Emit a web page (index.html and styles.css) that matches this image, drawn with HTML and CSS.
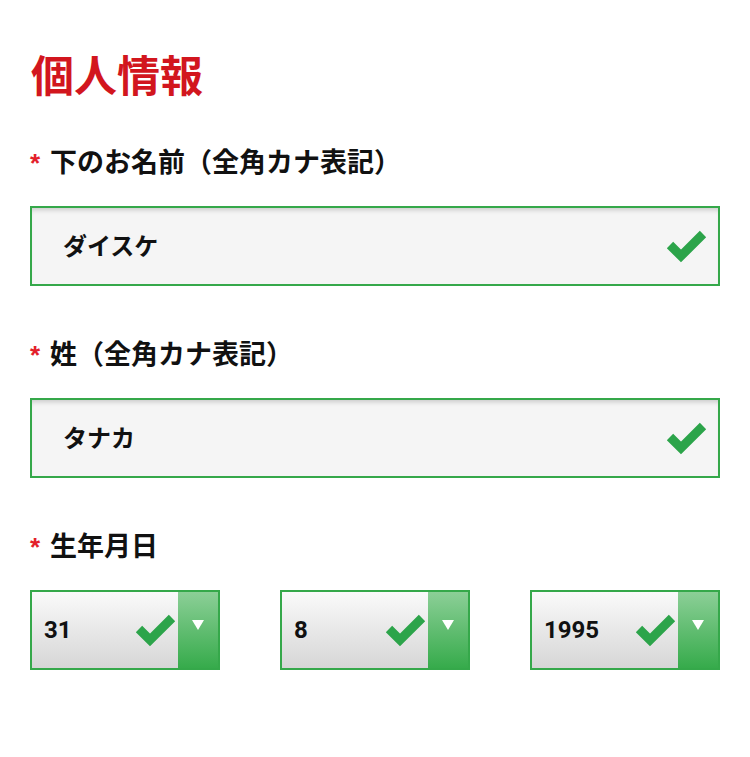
FILE: index.html
```html
<!DOCTYPE html>
<html lang="ja">
<head>
<meta charset="utf-8">
<link rel="stylesheet" href="styles.css">
</head>
<body>
<div class="page">
  <h1 class="title">個人情報</h1>

  <div class="field">
    <div class="label"><span class="req">*</span>下のお名前（全角カナ表記）</div>
    <div class="input">
      <span class="value">ダイスケ</span>
      <svg class="check" width="42" height="36" viewBox="0 0 42 36"><path d="M4 17 L15 28 L37 6" fill="none" stroke="#2ca44a" stroke-width="9"/></svg>
    </div>
  </div>

  <div class="field">
    <div class="label"><span class="req">*</span>姓（全角カナ表記）</div>
    <div class="input">
      <span class="value">タナカ</span>
      <svg class="check" width="42" height="36" viewBox="0 0 42 36"><path d="M4 17 L15 28 L37 6" fill="none" stroke="#2ca44a" stroke-width="9"/></svg>
    </div>
  </div>

  <div class="field">
    <div class="label"><span class="req">*</span>生年月日</div>
    <div class="selects">
      <div class="select">
        <span class="num">31</span>
        <svg class="check" width="42" height="36" viewBox="0 0 42 36"><path d="M4 17 L15 28 L37 6" fill="none" stroke="#2ca44a" stroke-width="9"/></svg>
        <span class="arrow"><svg width="12" height="10" viewBox="0 0 12 10"><path d="M0 0 H12 L6 10 Z" fill="#fff"/></svg></span>
      </div>
      <div class="select">
        <span class="num">8</span>
        <svg class="check" width="42" height="36" viewBox="0 0 42 36"><path d="M4 17 L15 28 L37 6" fill="none" stroke="#2ca44a" stroke-width="9"/></svg>
        <span class="arrow"><svg width="12" height="10" viewBox="0 0 12 10"><path d="M0 0 H12 L6 10 Z" fill="#fff"/></svg></span>
      </div>
      <div class="select">
        <span class="num">1995</span>
        <svg class="check" width="42" height="36" viewBox="0 0 42 36"><path d="M4 17 L15 28 L37 6" fill="none" stroke="#2ca44a" stroke-width="9"/></svg>
        <span class="arrow"><svg width="12" height="10" viewBox="0 0 12 10"><path d="M0 0 H12 L6 10 Z" fill="#fff"/></svg></span>
      </div>
    </div>
  </div>
</div>
</body>
</html>
```

FILE: styles.css
```css
* { box-sizing: border-box; }
html, body { margin: 0; padding: 0; background: #fff; }
body {
  font-family: "Noto Sans CJK JP", "Noto Sans", sans-serif;
  color: #111;
}
.page {
  width: 750px;
  padding: 52px 30px 0 30px;
}
.title {
  margin: 0 0 0 1px;
  font-size: 43px;
  line-height: 43px;
  height: 43px;
  font-weight: 700;
  color: #d2161e;
}
.field { margin-top: 53px; }
.field + .field { margin-top: 54px; }
.label {
  font-size: 27px;
  line-height: 26px;
  height: 26px;
  font-weight: 700;
  display: flex;
  align-items: center;
  margin-bottom: 32px;
}
.req {
  color: #e3202a;
  font-family: "Liberation Sans", sans-serif;
  font-size: 26px;
  line-height: 26px;
  width: 20px;
  margin-top: 4px;
}
.input {
  height: 80px;
  border: 2px solid #35a84a;
  background: #f5f5f5;
  box-shadow: inset 0 5px 5px -3px rgba(0,0,0,0.18);
  display: flex;
  align-items: center;
  justify-content: space-between;
  padding: 0 10px 0 31px;
}
.value {
  font-size: 24px;
  font-weight: 700;
  color: #111;
  margin-top: -4px;
}
.check { display: block; }
.selects {
  display: grid;
  grid-template-columns: 190px 190px 190px;
  column-gap: 60px;
}
.select {
  height: 80px;
  border: 2px solid #35a84a;
  background: linear-gradient(#fafafa, #d6d6d6);
  display: flex;
  align-items: center;
}
.num {
  flex: 1;
  padding-left: 12px;
  font-family: Roboto, "Liberation Sans", sans-serif;
  font-weight: 700;
  font-size: 24px;
  color: #111;
}
.select .check { margin-right: 1px; }
.arrow {
  width: 40px;
  align-self: stretch;
  background: linear-gradient(#8ccf97, #36ab4b);
  display: flex;
  justify-content: center;
  padding-top: 28px;
}
.arrow svg { display: block; }
```
